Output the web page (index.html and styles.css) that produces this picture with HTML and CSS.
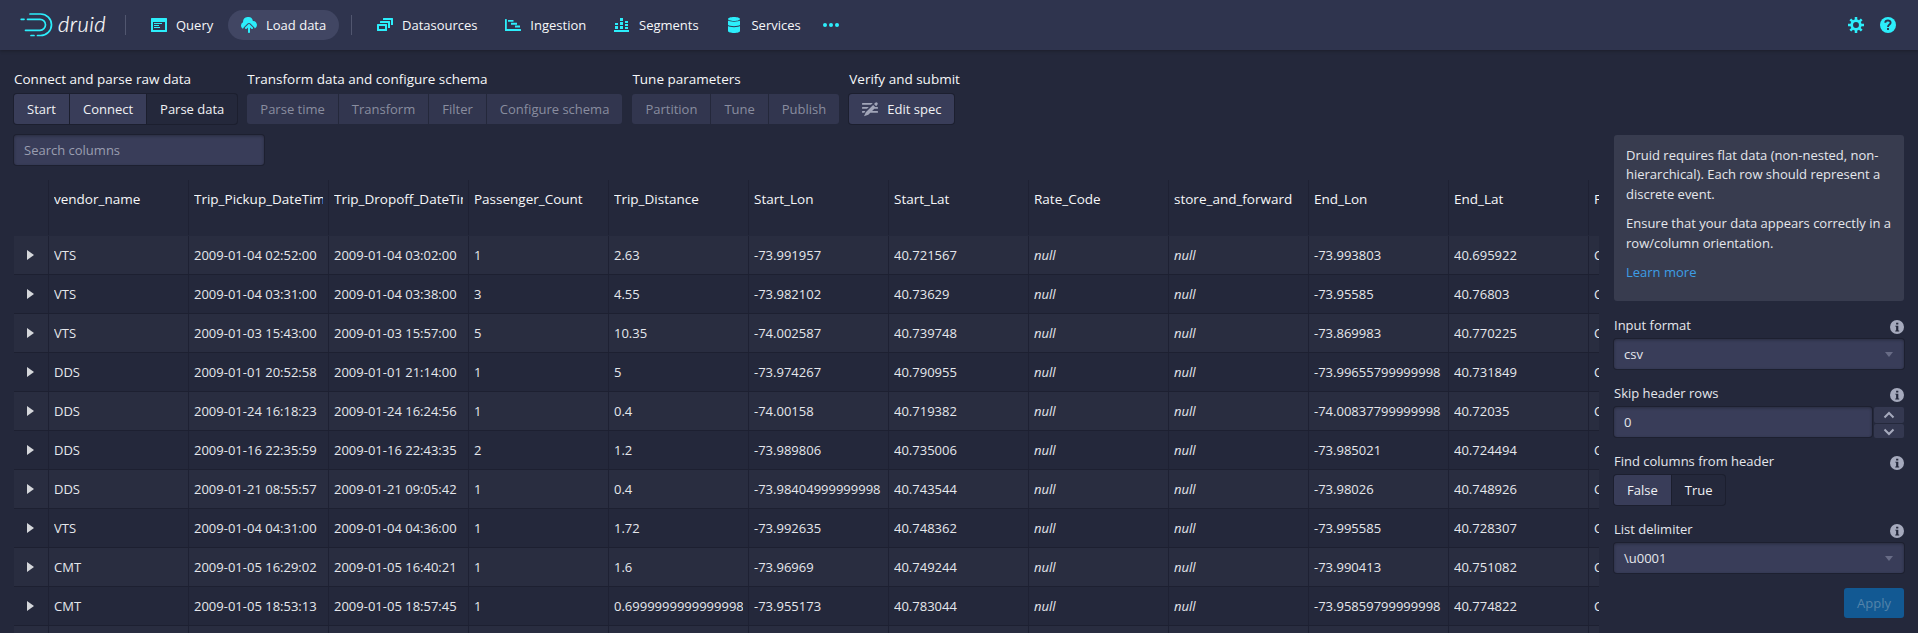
FILE: index.html
```html
<!DOCTYPE html>
<html lang="en">
<head>
<meta charset="utf-8">
<title>Druid - Load data</title>
<link rel="stylesheet" href="styles.css">
</head>
<body>
<header class="nav">
  <div class="logo">
    <svg width="34" height="26" viewBox="0 0 34 26" fill="none" stroke="#2ceefb" stroke-width="1.7" stroke-linecap="round"><path d="M10 2H20.5A11 10.75 0 0 1 20.5 23.5H17.5M14 23.5H11M1.200 7.300H4M7.500 7.300H20A5.500 5.500 0 0 1 20 18.300H5.500"/></svg>
    <span>druid</span>
  </div>
  <i class="sep sep-logo"></i>
  <a class="item"><svg class="icon"><use href="#i-app"/></svg>Query</a>
  <a class="item active"><svg class="icon"><use href="#i-upload"/></svg>Load data</a>
  <i class="sep"></i>
  <a class="item"><svg class="icon"><use href="#i-multi"/></svg>Datasources</a>
  <a class="item"><svg class="icon"><use href="#i-gantt"/></svg>Ingestion</a>
  <a class="item"><svg class="icon"><use href="#i-stack"/></svg>Segments</a>
  <a class="item"><svg class="icon"><use href="#i-db"/></svg>Services</a>
  <a class="item more"><svg class="icon"><use href="#i-more"/></svg></a>
  <div class="nav-right">
    <svg class="icon"><use href="#i-cog"/></svg>
    <svg class="icon"><use href="#i-help"/></svg>
  </div>
</header>

<main class="loader">
  <nav class="steps">
    <section><h2>Connect and parse raw data</h2><div class="group on"><button>Start</button><button>Connect</button><button class="current">Parse data</button></div></section>
    <section><h2>Transform data and configure schema</h2><div class="group off"><button>Parse time</button><button>Transform</button><button>Filter</button><button>Configure schema</button></div></section>
    <section><h2>Tune parameters</h2><div class="group off"><button>Partition</button><button>Tune</button><button>Publish</button></div></section>
    <section><h2>Verify and submit</h2><div class="group on"><button class="edit"><svg class="icon"><use href="#i-edit"/></svg>Edit spec</button></div></section>
  </nav>
  <div class="content">
    <div class="data">
      <div class="search">Search columns</div>
      <div class="table" id="table"></div>
    </div>
    <aside class="control">
      <div class="callout">
        <p>Druid requires flat data (non-nested, non-hierarchical). Each row should represent a discrete event.</p>
        <p>Ensure that your data appears correctly in a row/column orientation.</p>
        <p><a>Learn more</a></p>
      </div>
      <div class="field"><label>Input format<svg class="info"><use href="#i-info"/></svg></label><div class="input">csv<i class="caret"></i></div></div>
      <div class="field"><label>Skip header rows<svg class="info"><use href="#i-info"/></svg></label>
        <div class="numeric"><div class="input">0</div><div class="spin"><b><svg width="16" height="16" viewBox="0 0 16 16"><path d="M3.500 10.500l4.500-4.500 4.500 4.500"/></svg></b><b><svg width="16" height="16" viewBox="0 0 16 16"><path d="M3.500 5.500l4.500 4.500 4.500-4.500"/></svg></b></div></div></div>
      <div class="field"><label>Find columns from header<svg class="info"><use href="#i-info"/></svg></label><div class="group on"><button>False</button><button class="current">True</button></div></div>
      <div class="field"><label>List delimiter<svg class="info"><use href="#i-info"/></svg></label><div class="input">\u0001<i class="caret"></i></div></div>
      <button class="apply">Apply</button>
    </aside>
  </div>
</main>

<svg class="defs">
  <symbol id="i-app" viewBox="0 0 16 16"><path fill-rule="evenodd" d="M.6 1h14.800q.6 0 .6.6v12.800q0 .6-.6.6H.6Q0 15 0 14.400V1.600Q0 1 .6 1zM2 5v8h12V5zM3 6h8v1H3zM3 8h5v1H3zM3 10h6v1H3z"/></symbol>
  <symbol id="i-upload" viewBox="0 0 16 16"><path d="M8.710 7.290C8.530 7.110 8.280 7 8 7s-.53.110-.71.290l-3 3a1.003 1.003 0 001.420 1.420L7 10.410V15c0 .55.450 1 1 1s1-.45 1-1v-4.590l1.290 1.290c.180.190.430.300.710.300a1.003 1.003 0 00.710-1.710l-3-3zM12 4c-.030 0-.070 0-.1.010A5 5 0 002 5c0 .110.010.220.020.330A3.510 3.510 0 000 8.500c0 1.410.840 2.610 2.030 3.170C2.200 11.200 2.450 10.800 2.900 10.300l3.700-3.700c.8-.8 2-.8 2.800 0l3.700 3.700c.35.35.600.75.750 1.200A4 4 0 0012 4z"/></symbol>
  <symbol id="i-multi" viewBox="0 0 16 16"><path fill-rule="evenodd" d="M.5 7h9q.5 0 .5.5v6q0 .5-.5.5h-9q-.5 0-.5-.5v-6Q0 7 .5 7zM2 9v3h6V9zM3.500 4h9q.5 0 .5.5V11h-2V6H3V4.500q0-.5.5-.5zM6.500 1h9q.5 0 .5.5V8h-2V3H6V1.500q0-.5.5-.5z"/></symbol>
  <symbol id="i-gantt" viewBox="0 0 16 16"><path d="M.5 2h.8q.5 0 .5.5V12h13.700q.5 0 .5.5v1q0 .5-.5.5h-15q-.5 0-.5-.5v-11Q0 2 .5 2zM3 3h5.500v1.700H3zM6 5.800h6v1.900H6zM10 8.600h5v1.900h-5z"/></symbol>
  <symbol id="i-stack" viewBox="0 0 16 16"><path d="M0 13h15v2H0zM1 6h3v2H1zM1 9h3v3H1zM6 1h3v3H6zM6 5h3v3H6zM6 9h3v3H6zM11 4h3v2h-3zM11 7h3v2h-3zM11 10h3v2h-3z"/></symbol>
  <symbol id="i-db" viewBox="0 0 16 16"><path d="M2 2C2 .9 4.700 0 8 0s6 .9 6 2-2.700 2-6 2-6-.9-6-2zM2 3.500C3.500 5 12.500 5 14 3.500V8c-1.500 1.500-10.500 1.500-12 0zM2 9c1.500 1.500 10.500 1.500 12 0v5c0 1.100-2.700 2-6 2s-6-.9-6-2z"/></symbol>
  <symbol id="i-more" viewBox="0 0 16 16"><circle cx="2" cy="8" r="2"/><circle cx="8" cy="8" r="2"/><circle cx="14" cy="8" r="2"/></symbol>
  <symbol id="i-cog" viewBox="0 0 16 16"><path fill="none" stroke="currentColor" stroke-width="2.500" d="M8 0v3M8 13v3M0 8h3M13 8h3M2.300 2.300l2.100 2.100M11.600 11.600l2.100 2.100M2.300 13.700l2.100-2.100M11.600 4.400l2.100-2.100"/><circle cx="8" cy="8" r="4.300" fill="none" stroke="currentColor" stroke-width="2.700"/></symbol>
  <symbol id="i-help" viewBox="0 0 16 16"><circle cx="8" cy="8" r="8"/><path fill="none" stroke="#2f344e" stroke-width="1.900" d="M5.300 5.800C5.300 2.800 10.600 2.700 10.600 5.800 10.600 7.700 8 7.500 8 10M8 11v2"/></symbol>
  <symbol id="i-info" viewBox="0 0 16 16"><circle cx="8" cy="8" r="8"/><path fill="#24283b" d="M7 3h2.500v2H7zM6 6.500h3.500V12h1v1H6v-1h1V7.500H6z"/></symbol>
  <symbol id="i-edit" viewBox="0 0 16 16"><path d="M.5 2h10.300L9 3.800H.5Q0 3.800 0 2.900T.5 2zM.5 6h6.300L5 7.800H.5Q0 7.800 0 6.900T.5 6zM.5 10h2.800l-1 1.800H.5q-.5 0-.5-.9T.5 10zM13.400 6h2.100q.5 0 .5.900t-.5.900h-3.900zM9.600 10h5.900q.5 0 .5.900t-.5.900H7.800zM3.800 11.200l7.300-7.300 2.500 2.500-7.300 7.300L2 15.200zM12 3l1.300-1.300q1-.9 2 0 .9 1 0 2L14.200 5.200z"/></symbol>
</svg>
<script src="table.js"></script>
</body>
</html>
```
FILE: styles.css
```css
* { box-sizing: border-box; }
body { margin: 0; height: 633px; overflow: hidden; background: #24283b; color: #e5e7ec; font: 13px/18px "Open Sans", sans-serif; }
button { font: inherit; border: 0; margin: 0; color: inherit; }
.defs { display: none; }
.icon { width: 16px; height: 16px; fill: currentColor; flex: none; }
.nav { position: relative; height: 50px; display: flex; align-items: center; gap: 2px; padding: 0 22px 0 20px; background: #2f344e; color: #f6f7f9; box-shadow: 0 1px 3px rgba(17,20,24,.45); }
.logo { display: flex; align-items: center; width: 105px; gap: 4px; }
.logo span { font: italic 300 22px/26px Lato, sans-serif; letter-spacing: .4px; padding-bottom: 3px; color: #fff; -webkit-text-stroke: .2px #fff; }
.logo svg { flex: none; }
.sep { width: 1px; height: 20px; margin: 0 10px; background: #51566f; }
.sep-logo { margin: 0 10px 0 -2px; }
.item { display: flex; align-items: center; gap: 9px; height: 30px; padding: 0 12.8px 0 13px; border-radius: 15px; }
.item.more { padding: 0 7px; }
.item.active { background: #414663; }
.item .icon, .nav-right { color: #2ceefb; }
.nav-right { margin-left: auto; display: flex; gap: 16px; }
.loader { padding: 20px 14px 0; }
.steps { display: flex; gap: 10px; }
h2 { margin: 0 0 5px; font: 400 13.5px/19px "Open Sans", sans-serif; color: #f6f7f9; }
.group { display: flex; gap: 1px; width: max-content; height: 30px; border-radius: 3px; }
.group button { padding: 0 13px; background: #393d59; display: flex; align-items: center; color: #f0f1f4; }
.group button:first-child { border-radius: 3px 0 0 3px; }
.group button:last-child { border-radius: 0 3px 3px 0; }
.group button:only-child { border-radius: 3px; }
.group.on { background: #1b1e2d; box-shadow: 0 0 0 1px #1c1f2f; }
.group.off button { background: #32364f; color: #898d9f; }
.group button.current { background: #24283b; }
.group .edit { gap: 9px; }
.edit .icon { color: #a1a5b8; }
.content { display: flex; gap: 15px; margin-top: 10px; height: 499px; }
.data { padding: 1px 0 0 1px; margin-left: -1px; width: 1586px; flex: none; overflow: hidden; }
.search, .input { height: 30px; padding: 0 10px; border-radius: 3px; line-height: 31px; background: #393d59; box-shadow: 0 0 0 1px #1d2030, inset 0 1px 3px rgba(17,20,24,.4); }
.search { width: 250px; margin: 0 0 15px 0; color: #999db0; }
.row { display: flex; height: 39px; border-bottom: 1px solid #1d2031; width: max-content; }
.row.odd { background: #292d40; }
.row div { width: 140px; flex: none; border-right: 1px solid #1e2133; padding: 0 5px; line-height: 38px; white-space: nowrap; }
.row span { display: block; overflow: hidden; }
.row div:first-child { width: 35px; padding: 14px 0 0 13px; }
.row .arrow { display: block; width: 0; height: 0; border: 5px solid transparent; border-left: 7px solid #d5d7db; border-right: 0; }
.row.head { height: 56px; font-size: 13.5px; color: #f6f7f9; border-bottom-color: #24283b; }
.row.head div { line-height: 38px; }
.control { width: 290px; padding-top: 1px; }
.callout { height: 166px; padding: 10.8px 12px 0; border-radius: 3px; background: #383c4f; margin-bottom: 15px; line-height: 19.5px; }
.callout p { margin: 0 -2px 10px 0; }
.callout a { color: #3d9ee5; }
.field { height: 68px; }
.field label { display: flex; justify-content: space-between; height: 23px; line-height: 18px; }
.info { width: 14px; height: 14px; margin-top: 4px; fill: #a6aabd; }
.input { display: flex; justify-content: space-between; align-items: center; }
.caret { border: 4px solid transparent; border-top: 5px solid #686c86; border-bottom: 0; margin-right: 1px; }
.numeric { display: flex; gap: 2px; }
.numeric .input { flex: 1; }
.spin { width: 30px; height: 31px; display: grid; grid-template-rows: 16px 14px; gap: 1px; }
.spin b { background: #343850; display: grid; place-items: center; border-radius: 2px; overflow: hidden; }
.spin svg { fill: none; stroke: #a6aabd; stroke-width: 2; }
.apply { display: block; width: 60px; height: 30px; margin: 0 0 0 auto; border-radius: 3px; background: #125993; color: #5484aa; }
```
FILE: table.js
```js
const columns = ['vendor_name', 'Trip_Pickup_DateTime', 'Trip_Dropoff_DateTime', 'Passenger_Count', 'Trip_Distance', 'Start_Lon', 'Start_Lat', 'Rate_Code', 'store_and_forward', 'End_Lon', 'End_Lat', 'F'];
const rows = [
  ['VTS', '2009-01-04 02:52:00', '2009-01-04 03:02:00', '1', '2.63', '-73.991957', '40.721567', null, null, '-73.993803', '40.695922', 'C'],
  ['VTS', '2009-01-04 03:31:00', '2009-01-04 03:38:00', '3', '4.55', '-73.982102', '40.73629', null, null, '-73.95585', '40.76803', 'C'],
  ['VTS', '2009-01-03 15:43:00', '2009-01-03 15:57:00', '5', '10.35', '-74.002587', '40.739748', null, null, '-73.869983', '40.770225', 'C'],
  ['DDS', '2009-01-01 20:52:58', '2009-01-01 21:14:00', '1', '5', '-73.974267', '40.790955', null, null, '-73.99655799999998', '40.731849', 'C'],
  ['DDS', '2009-01-24 16:18:23', '2009-01-24 16:24:56', '1', '0.4', '-74.00158', '40.719382', null, null, '-74.00837799999998', '40.72035', 'C'],
  ['DDS', '2009-01-16 22:35:59', '2009-01-16 22:43:35', '2', '1.2', '-73.989806', '40.735006', null, null, '-73.985021', '40.724494', 'C'],
  ['DDS', '2009-01-21 08:55:57', '2009-01-21 09:05:42', '1', '0.4', '-73.98404999999998', '40.743544', null, null, '-73.98026', '40.748926', 'C'],
  ['VTS', '2009-01-04 04:31:00', '2009-01-04 04:36:00', '1', '1.72', '-73.992635', '40.748362', null, null, '-73.995585', '40.728307', 'C'],
  ['CMT', '2009-01-05 16:29:02', '2009-01-05 16:40:21', '1', '1.6', '-73.96969', '40.749244', null, null, '-73.990413', '40.751082', 'C'],
  ['CMT', '2009-01-05 18:53:13', '2009-01-05 18:57:45', '1', '0.6999999999999998', '-73.955173', '40.783044', null, null, '-73.95859799999998', '40.774822', 'C'],
  ['', '', '', '', '', '', '', '', '', '', '', '']
];
const cell = v => `<div><span>${v === null ? '<em>null</em>' : v}</span></div>`;
document.getElementById('table').innerHTML =
  `<div class="row head"><div></div>${columns.map(cell).join('')}</div>` +
  rows.map((r, i) => `<div class="row ${i % 2 ? '' : 'odd'}"><div><i class="arrow"></i></div>${r.map(cell).join('')}</div>`).join('');
```
